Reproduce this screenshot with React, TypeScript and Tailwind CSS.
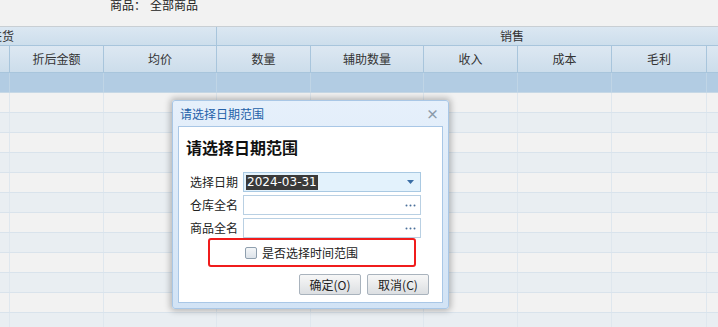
import React from "react";

const cols = [
  { w: 10, label: "" },
  { w: 94, label: "折后金额" },
  { w: 113, label: "均价" },
  { w: 94, label: "数量" },
  { w: 113, label: "辅助数量" },
  { w: 94, label: "收入" },
  { w: 94, label: "成本" },
  { w: 95, label: "毛利" },
  { w: 40, label: "" },
];

const font = { fontFamily: '"Noto Sans CJK SC", "Noto Sans", sans-serif' };

function Dots() {
  return (
    <svg width="11" height="3" viewBox="0 0 11 3">
      <circle cx="1.5" cy="1.5" r="1" fill="#4a6f9a" />
      <circle cx="5.5" cy="1.5" r="1" fill="#4a6f9a" />
      <circle cx="9.5" cy="1.5" r="1" fill="#4a6f9a" />
    </svg>
  );
}

export default function App() {
  const rows = Array.from({ length: 12 });
  return (
    <div
      className="relative w-[718px] h-[327px] overflow-hidden bg-[#f2f2f2] text-[12px] text-[#333]"
      style={font}
    >
      <div className="h-[26px] flex items-start pl-[110px] leading-[10px] text-[#222]">
        <span>商品：</span>
        <span className="ml-[4px]">全部商品</span>
      </div>
      <div className="border-t border-[#c9cfd4]">
        {/* group header */}
        <div className="flex h-[19px] bg-gradient-to-b from-[#dbe7f2] to-[#cddeec] border-b border-[#a8c5dc]">
          <div className="w-[217px] shrink-0 border-r border-[#a8c5dc] overflow-hidden flex items-center">
            <span className="-ml-[10px] leading-[18px] text-[#333]">进货</span>
          </div>
          <div className="flex-1 flex items-center pl-[283px]">
            <span className="leading-[18px] text-[#333]">销售</span>
          </div>
        </div>
        {/* column header */}
        <div className="flex h-[27px] bg-gradient-to-b from-[#dde8f2] to-[#ccddeb] border-b border-[#a8c5dc]">
          {cols.map((c, i) => (
            <div
              key={i}
              className="shrink-0 border-r border-[#a8c5dc] flex items-center justify-center text-[#333]"
              style={{ width: c.w }}
            >
              {c.label}
            </div>
          ))}
        </div>
        {/* selected row */}
        <div className="flex h-[20px] bg-[#b2cce3] border-b border-[#c6d8e6]">
          {cols.map((c, i) => (
            <div key={i} className="shrink-0 border-r border-[#c0d5e6]" style={{ width: c.w }} />
          ))}
        </div>
        {rows.map((_, r) => (
          <div
            key={r}
            className={`flex h-[20px] border-b border-[#d9e3ec] ${r % 2 === 0 ? "bg-[#f2f2f2]" : "bg-[#e9eef2]"}`}
          >
            {cols.map((c, i) => (
              <div key={i} className="shrink-0 border-r border-[#dfe7ee]" style={{ width: c.w }} />
            ))}
          </div>
        ))}
      </div>

      {/* dialog */}
      <div className="absolute left-[172px] top-[100px] w-[277px] h-[209px] bg-gradient-to-b from-[#e6f0fb] to-[#d2e3f5] border border-[#a9c7e6] rounded-[3px] shadow-[0_0_6px_2px_rgba(0,0,0,0.25)] flex flex-col px-[5px] pb-[5px]">
        <div className="h-[25px] shrink-0 flex items-center justify-between pl-[2px] pr-[4px]">
          <span className="text-[12px] text-[#2461a9]">请选择日期范围</span>
          <span className="text-[#8a9aa8] text-[13px] leading-none font-bold">×</span>
        </div>
        <div className="flex-1 bg-white border border-[#a9c7e6] flex flex-col">
          <div className="pl-[7px] pt-[9px] text-[16px] font-bold text-[#111] leading-[22px]">请选择日期范围</div>
          <div className="mt-[14px] flex flex-col gap-[3px]">
            <div className="flex items-center h-[20px]">
              <span className="w-[64px] pl-[11px] shrink-0 text-[#222]">选择日期</span>
              <div className="w-[178px] h-[20px] bg-[#e3f2fc] border border-[#a9c9e2] flex items-center justify-between pl-[2px] pr-[6px]">
                <span className="bg-[#3a3a3a] text-white px-[1px] leading-[15px] text-[12px]" style={{ fontFamily: '"DejaVu Sans", sans-serif' }}>
                  2024-03-31
                </span>
                <svg width="7" height="4" viewBox="0 0 7 4">
                  <polygon points="0,0 7,0 3.5,4" fill="#3b6ea5" />
                </svg>
              </div>
            </div>
            <div className="flex items-center h-[20px]">
              <span className="w-[64px] pl-[11px] shrink-0 text-[#222]">仓库全名</span>
              <div className="w-[178px] h-[20px] bg-white border border-[#b9d0e3] flex items-center justify-end pr-[4px]">
                <Dots />
              </div>
            </div>
            <div className="flex items-center h-[20px]">
              <span className="w-[64px] pl-[11px] shrink-0 text-[#222]">商品全名</span>
              <div className="w-[178px] h-[20px] bg-white border border-[#b9d0e3] flex items-center justify-end pr-[4px]">
                <Dots />
              </div>
            </div>
          </div>
          <div className="ml-[29px] mt-[0px] w-[208px] h-[29px] border-2 border-[#f01c1c] rounded-[3px] flex items-center pl-[35px]">
            <span className="w-[12px] h-[12px] border border-[#8f9fae] rounded-[2px] bg-gradient-to-b from-[#f4f6f8] to-[#dde3e9] shrink-0" />
            <span className="ml-[5px] text-[#222]">是否选择时间范围</span>
          </div>
          <div className="flex justify-end gap-[6px] pr-[13px] mt-[7px]">
            <button className="w-[62px] h-[21px] border border-[#a9b3bd] rounded-[2px] bg-gradient-to-b from-[#f7f7f7] to-[#dcdfe2] text-[12px] text-[#222] flex items-center justify-center">
              确定(O)
            </button>
            <button className="w-[62px] h-[21px] border border-[#a9b3bd] rounded-[2px] bg-gradient-to-b from-[#f7f7f7] to-[#dcdfe2] text-[12px] text-[#222] flex items-center justify-center">
              取消(C)
            </button>
          </div>
        </div>
      </div>
    </div>
  );
}
